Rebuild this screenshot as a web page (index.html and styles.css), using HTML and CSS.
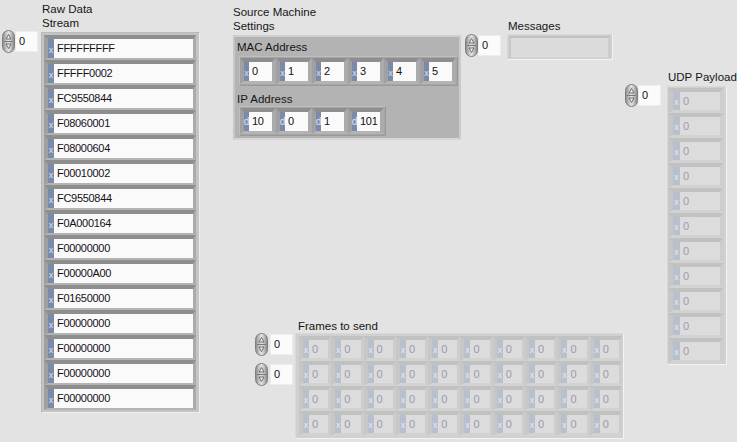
FILE: index.html
```html
<!DOCTYPE html>
<html>
<head>
<meta charset="utf-8">
<link rel="stylesheet" href="styles.css">
</head>
<body>
<div class="panel">

  <section class="ctl raw">
    <div class="lbl">Raw Data<br>Stream</div>
    <div class="idx"><span class="spin"><svg width="11" height="21" viewBox="0 0 11 21"><path class="tri" d="M5.5 3.5L8 8H3z"/><path class="sep" d="M1 10.5H10"/><path class="tri" d="M5.5 17.5L8 13H3z"/></svg></span><span class="ibox">0</span></div>
    <div class="arr rawarr">
      <div class="el on re"><span class="rdx">x</span><span class="val">FFFFFFFFF</span></div>
      <div class="el on re"><span class="rdx">x</span><span class="val">FFFFF0002</span></div>
      <div class="el on re"><span class="rdx">x</span><span class="val">FC9550844</span></div>
      <div class="el on re"><span class="rdx">x</span><span class="val">F08060001</span></div>
      <div class="el on re"><span class="rdx">x</span><span class="val">F08000604</span></div>
      <div class="el on re"><span class="rdx">x</span><span class="val">F00010002</span></div>
      <div class="el on re"><span class="rdx">x</span><span class="val">FC9550844</span></div>
      <div class="el on re"><span class="rdx">x</span><span class="val">F0A000164</span></div>
      <div class="el on re"><span class="rdx">x</span><span class="val">F00000000</span></div>
      <div class="el on re"><span class="rdx">x</span><span class="val">F00000A00</span></div>
      <div class="el on re"><span class="rdx">x</span><span class="val">F01650000</span></div>
      <div class="el on re"><span class="rdx">x</span><span class="val">F00000000</span></div>
      <div class="el on re"><span class="rdx">x</span><span class="val">F00000000</span></div>
      <div class="el on re"><span class="rdx">x</span><span class="val">F00000000</span></div>
      <div class="el on re"><span class="rdx">x</span><span class="val">F00000000</span></div>
    </div>
  </section>

  <section class="ctl src">
    <div class="lbl">Source Machine<br>Settings</div>
    <div class="clu">
      <div class="lbl sub">MAC Address</div>
      <div class="arr smarr">
        <div class="el on se"><span class="rdx">x</span><span class="val">0</span></div>
        <div class="el on se"><span class="rdx">x</span><span class="val">1</span></div>
        <div class="el on se"><span class="rdx">x</span><span class="val">2</span></div>
        <div class="el on se"><span class="rdx">x</span><span class="val">3</span></div>
        <div class="el on se"><span class="rdx">x</span><span class="val">4</span></div>
        <div class="el on se"><span class="rdx">x</span><span class="val">5</span></div>
      </div>
      <div class="lbl sub ip">IP Address</div>
      <div class="arr smarr">
        <div class="el on se"><span class="rdx d">d</span><span class="val">10</span></div>
        <div class="el on se"><span class="rdx d">d</span><span class="val">0</span></div>
        <div class="el on se"><span class="rdx d">d</span><span class="val">1</span></div>
        <div class="el on se"><span class="rdx d">d</span><span class="val">101</span></div>
      </div>
    </div>
  </section>

  <section class="ctl msg">
    <div class="lbl">Messages</div>
    <div class="idx"><span class="spin"><svg width="11" height="21" viewBox="0 0 11 21"><path class="tri" d="M5.5 3.5L8 8H3z"/><path class="sep" d="M1 10.5H10"/><path class="tri" d="M5.5 17.5L8 13H3z"/></svg></span><span class="ibox">0</span></div>
    <div class="arr offarr msgarr">
      <div class="el off me"><span class="val"></span></div>
    </div>
  </section>

  <section class="ctl udp">
    <div class="lbl">UDP Payload</div>
    <div class="idx"><span class="spin"><svg width="11" height="21" viewBox="0 0 11 21"><path class="tri" d="M5.5 3.5L8 8H3z"/><path class="sep" d="M1 10.5H10"/><path class="tri" d="M5.5 17.5L8 13H3z"/></svg></span><span class="ibox">0</span></div>
    <div class="arr offarr udparr">
      <div class="el off ue"><span class="rdx">x</span><span class="val">0</span></div>
      <div class="el off ue"><span class="rdx">x</span><span class="val">0</span></div>
      <div class="el off ue"><span class="rdx">x</span><span class="val">0</span></div>
      <div class="el off ue"><span class="rdx">x</span><span class="val">0</span></div>
      <div class="el off ue"><span class="rdx">x</span><span class="val">0</span></div>
      <div class="el off ue"><span class="rdx">x</span><span class="val">0</span></div>
      <div class="el off ue"><span class="rdx">x</span><span class="val">0</span></div>
      <div class="el off ue"><span class="rdx">x</span><span class="val">0</span></div>
      <div class="el off ue"><span class="rdx">x</span><span class="val">0</span></div>
      <div class="el off ue"><span class="rdx">x</span><span class="val">0</span></div>
      <div class="el off ue"><span class="rdx">x</span><span class="val">0</span></div>
    </div>
  </section>

  <section class="ctl frm">
    <div class="lbl">Frames to send</div>
    <div class="idxs">
      <div class="idx"><span class="spin"><svg width="11" height="21" viewBox="0 0 11 21"><path class="tri" d="M5.5 3.5L8 8H3z"/><path class="sep" d="M1 10.5H10"/><path class="tri" d="M5.5 17.5L8 13H3z"/></svg></span><span class="ibox">0</span></div>
      <div class="idx"><span class="spin"><svg width="11" height="21" viewBox="0 0 11 21"><path class="tri" d="M5.5 3.5L8 8H3z"/><path class="sep" d="M1 10.5H10"/><path class="tri" d="M5.5 17.5L8 13H3z"/></svg></span><span class="ibox">0</span></div>
    </div>
    <div class="arr offarr frmarr">
      <div class="el off fe"><span class="rdx">x</span><span class="val">0</span></div>
      <div class="el off fe"><span class="rdx">x</span><span class="val">0</span></div>
      <div class="el off fe"><span class="rdx">x</span><span class="val">0</span></div>
      <div class="el off fe"><span class="rdx">x</span><span class="val">0</span></div>
      <div class="el off fe"><span class="rdx">x</span><span class="val">0</span></div>
      <div class="el off fe"><span class="rdx">x</span><span class="val">0</span></div>
      <div class="el off fe"><span class="rdx">x</span><span class="val">0</span></div>
      <div class="el off fe"><span class="rdx">x</span><span class="val">0</span></div>
      <div class="el off fe"><span class="rdx">x</span><span class="val">0</span></div>
      <div class="el off fe"><span class="rdx">x</span><span class="val">0</span></div>
      <div class="el off fe"><span class="rdx">x</span><span class="val">0</span></div>
      <div class="el off fe"><span class="rdx">x</span><span class="val">0</span></div>
      <div class="el off fe"><span class="rdx">x</span><span class="val">0</span></div>
      <div class="el off fe"><span class="rdx">x</span><span class="val">0</span></div>
      <div class="el off fe"><span class="rdx">x</span><span class="val">0</span></div>
      <div class="el off fe"><span class="rdx">x</span><span class="val">0</span></div>
      <div class="el off fe"><span class="rdx">x</span><span class="val">0</span></div>
      <div class="el off fe"><span class="rdx">x</span><span class="val">0</span></div>
      <div class="el off fe"><span class="rdx">x</span><span class="val">0</span></div>
      <div class="el off fe"><span class="rdx">x</span><span class="val">0</span></div>
      <div class="el off fe"><span class="rdx">x</span><span class="val">0</span></div>
      <div class="el off fe"><span class="rdx">x</span><span class="val">0</span></div>
      <div class="el off fe"><span class="rdx">x</span><span class="val">0</span></div>
      <div class="el off fe"><span class="rdx">x</span><span class="val">0</span></div>
      <div class="el off fe"><span class="rdx">x</span><span class="val">0</span></div>
      <div class="el off fe"><span class="rdx">x</span><span class="val">0</span></div>
      <div class="el off fe"><span class="rdx">x</span><span class="val">0</span></div>
      <div class="el off fe"><span class="rdx">x</span><span class="val">0</span></div>
      <div class="el off fe"><span class="rdx">x</span><span class="val">0</span></div>
      <div class="el off fe"><span class="rdx">x</span><span class="val">0</span></div>
      <div class="el off fe"><span class="rdx">x</span><span class="val">0</span></div>
      <div class="el off fe"><span class="rdx">x</span><span class="val">0</span></div>
      <div class="el off fe"><span class="rdx">x</span><span class="val">0</span></div>
      <div class="el off fe"><span class="rdx">x</span><span class="val">0</span></div>
      <div class="el off fe"><span class="rdx">x</span><span class="val">0</span></div>
      <div class="el off fe"><span class="rdx">x</span><span class="val">0</span></div>
      <div class="el off fe"><span class="rdx">x</span><span class="val">0</span></div>
      <div class="el off fe"><span class="rdx">x</span><span class="val">0</span></div>
      <div class="el off fe"><span class="rdx">x</span><span class="val">0</span></div>
      <div class="el off fe"><span class="rdx">x</span><span class="val">0</span></div>
    </div>
  </section>

</div>
</body>
</html>
```

FILE: styles.css
```css
* { box-sizing: border-box; }
html, body { margin: 0; }
body {
  background: #e3e3e3;
  font-family: "Liberation Sans", Arial, sans-serif;
  color: #141414;
}
.panel {
  position: relative;
  width: 737px;
  height: 442px;
  overflow: hidden;
  background: #e3e3e3;
}

/* top-level controls placed on the front-panel canvas */
.ctl {
  position: absolute;
  display: grid;
  justify-items: start;
}
.lbl {
  font-size: 11.5px;
  line-height: 14px;
  white-space: nowrap;
  color: #161616;
}

/* index display (spinner + box) */
.idx { display: flex; align-items: center; }
.spin {
  display: block;
  width: 13px;
  height: 23px;
  border: 1px solid #7d7d7d;
  border-radius: 6.5px;
  background: linear-gradient(90deg, #8e8e8e 0%, #c9c9c9 30%, #e2e2e2 50%, #c4c4c4 72%, #8a8a8a 100%);
}
.spin svg { display: block; }
.tri { fill: #ececec; stroke: #555; stroke-width: 0.8; stroke-linejoin: round; }
.sep { stroke: #7a7a7a; stroke-width: 1; fill: none; }
.ibox {
  width: 23px;
  height: 21px;
  background: #fbfbfb;
  border: 1px solid #ededed;
  font-size: 11px;
  line-height: 19px;
  padding-left: 3px;
  color: #10101a;
}

/* array frames */
.arr { display: flex; flex-direction: column; }

/* generic element */
.el { display: flex; border-style: solid; }
.rdx {
  display: flex;
  align-items: center;
  justify-content: center;
  font-size: 9px;
  line-height: 1;
  padding-top: 3px;
}
.rdx.d { font-size: 10px; padding-top: 1px; }
.val {
  flex: 1;
  font-size: 11px;
  letter-spacing: -0.3px;
  padding-left: 3px;
  white-space: nowrap;
  overflow: hidden;
}

.on { border-color: #8e8e8e #ababab #b4b4b4 #a0a0a0; }
.on .rdx { background: #7a8aaa; color: #dfe4ef; }
.on .val { background: #fafafa; color: #141018; }

.off { border-color: #c1c1c1 #cdcdcd #d2d2d2 #c7c7c7; }
.off .rdx { background: #b8bfcd; color: #e8ebf0; }
.off .val { background: #dcdcdc; color: #9a9aae; }

/* Raw Data Stream */
.raw {
  left: 2px;
  top: 2px;
  grid-template-columns: 39px auto;
  grid-template-rows: 30px auto;
}
.raw .lbl { grid-column: 2; grid-row: 1; padding-left: 1px; }
.raw .idx { grid-column: 1; grid-row: 2; align-self: start; margin-top: -2px; }
.raw .arr { grid-column: 2; grid-row: 2; }
.rawarr {
  background: #c4c4c4;
  border: 1px solid;
  border-color: #b9b9b9 #eeeeee #eeeeee #b9b9b9;
  padding: 2px 3px 2px 2px;
}
.re { width: 152px; height: 25px; border-width: 4px 3px 2px 4px; }
.re .rdx { width: 6px; }
.re .val { line-height: 19px; }

/* Source Machine Settings cluster */
.src { left: 233px; top: 5px; }
.clu {
  margin-top: 2px;
  width: 228px;
  background: #b3b3b3;
  border: 2px solid;
  border-color: #cfcfcf #cbcbcb #d6d6d6 #c6c6c6;
  padding: 3px 0 2px 0;
  display: flex;
  flex-direction: column;
  align-items: flex-start;
}
.sub { padding-left: 2px; }
.sub.ip { margin-top: 6px; }
.smarr {
  flex-direction: row;
  margin-top: 2px;
  margin-left: 4px;
  background: #a5a5a5;
  border: 1px solid;
  border-color: #bebebe #9a9a9a #9a9a9a #bebebe;
  padding: 1px 1px 1px 0;
}
.sub.ip + .smarr { margin-top: 0; }
.se { width: 36px; height: 26px; border-width: 4px 4px 3px 4px; }
.se .rdx { width: 5px; }
.se .val { line-height: 19px; }

/* disabled array frames */
.offarr {
  background: #d0d0d0;
  border: 1px solid;
  border-color: #d9d9d9 #f3f3f3 #f3f3f3 #d9d9d9;
}

/* Messages */
.msg {
  left: 465px;
  top: 19px;
  grid-template-columns: 42px auto;
  grid-template-rows: 15px auto;
}
.msg .lbl { grid-column: 2; grid-row: 1; padding-left: 1px; }
.msg .idx { grid-column: 1; grid-row: 2; align-self: start; }
.msg .arr { grid-column: 2; grid-row: 2; }
.msgarr { padding: 1px 1px 0 1px; }
.me { width: 102px; height: 23px; border-width: 2px 3px 2px 2px; }
.me .val { background: #dbdbdb; }

/* UDP Payload */
.udp {
  left: 625px;
  top: 70px;
  grid-template-columns: 42px auto;
  grid-template-rows: 16px auto;
}
.udp .lbl { grid-column: 2; grid-row: 1; padding-left: 1px; }
.udp .idx { grid-column: 1; grid-row: 2; align-self: start; margin-top: -2px; }
.udp .arr { grid-column: 2; grid-row: 2; }
.udparr { padding: 1px 3px 1px 0; }
.ue { width: 55px; height: 25px; border-width: 4px 3px 3px 5px; }
.ue .rdx { width: 7px; }
.ue .val { line-height: 18px; }

/* Frames to send */
.frm {
  left: 255px;
  top: 319px;
  grid-template-columns: 40px auto;
  grid-template-rows: 14px auto;
}
.frm .lbl { grid-column: 2; grid-row: 1; padding-left: 3px; }
.idxs {
  grid-column: 1;
  grid-row: 2;
  display: flex;
  flex-direction: column;
  gap: 7px;
}
.frm .idx { gap: 2px; }
.frm .arr { grid-column: 2; grid-row: 2; }
.frmarr {
  display: grid;
  grid-template-columns: repeat(10, 32.3px);
  grid-auto-rows: 25px;
  padding: 2px 1px 2px 3px;
}
.fe { height: 25px; border-width: 4px 3px 3px 4px; }
.fe .rdx { width: 6px; }
.fe .val { line-height: 18px; }
```
